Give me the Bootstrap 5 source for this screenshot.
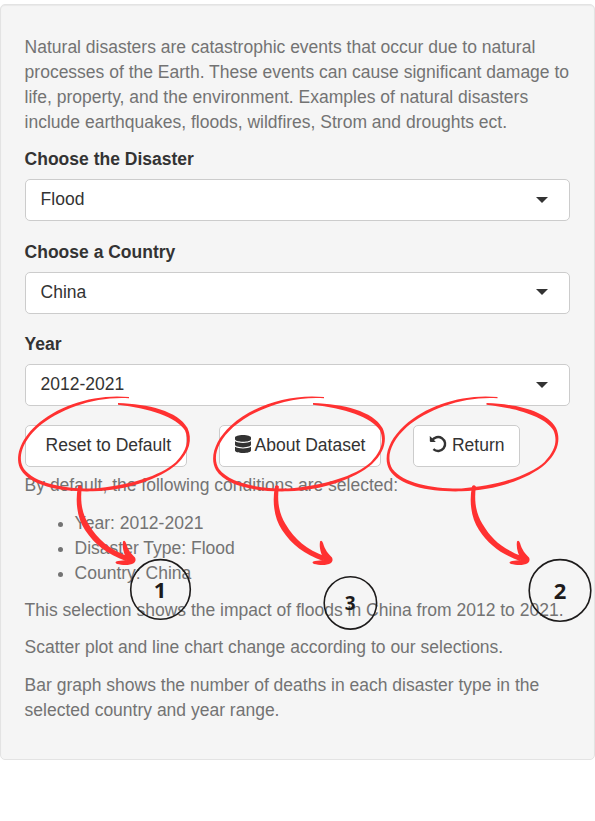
<!DOCTYPE html>
<html lang="en">
<head>
<meta charset="utf-8">
<meta name="viewport" content="width=device-width, initial-scale=1">
<title>Natural disasters</title>
<link href="https://cdn.jsdelivr.net/npm/bootstrap@5.3.0/dist/css/bootstrap.min.css" rel="stylesheet">
<style>
  body { font-family: "Liberation Sans", Arial, sans-serif; font-size: 17.5px; line-height: 25px; color: #333; background: #fff; overflow: hidden; }
  .side-panel { margin-top: 4px; height: 756px; padding: 30px 24px 0 23.6px; background: #f5f5f5; border: 1.25px solid #e3e3e3; border-radius: 5px; box-shadow: inset 0 1px 1px rgba(0,0,0,.05); }
  .help-text { color: #737373; }
  .help-text p { margin-bottom: 12.5px; }
  .help-text .intro { margin-bottom: 12px; }
  .help-text ul { padding-left: 50px; margin: 13px 0 12px; }
  .help-text .lead-in { margin-bottom: 0; }
  .field-label { height: 32px; }
  .select-box { height: 42px; padding: 0 21px 1px 15px; background: #fff; border: 1px solid #ccc; border-radius: 5px; margin-bottom: 18.5px; cursor: pointer; }
  .caret { width: 12px; height: 6px; fill: #333; }
  .actions { gap: 32px; margin-bottom: 6px; }
  .btn-plain { height: 42px; padding: 0 15px 1px; font-size: 17.5px; line-height: 25px; color: #333; background: #fff; border: 1px solid #ccc; border-radius: 5px; white-space: nowrap; }
  #reset { padding-left: 20px; padding-right: 14.5px; }
  #about { gap: 4px; }
  #back { gap: 4.5px; padding-right: 14.5px; }
  #about svg, #back svg { margin-bottom: 2px; }
  .notes { left: 0; top: 0; width: 595px; height: 821px; pointer-events: none; }
  .notes text { font: 700 22px "Open Sans", sans-serif; fill: #1d1b1b; text-anchor: middle; }
</style>
<script src="https://cdn.jsdelivr.net/npm/bootstrap@5.3.0/dist/js/bootstrap.bundle.min.js"></script>
</head>
<body>
<main class="side-panel">
  <div class="help-text"><p class="intro">Natural disasters are catastrophic events that occur due to natural<br>processes of the Earth. These events can cause significant damage to<br>life, property, and the environment. Examples of natural disasters<br>include earthquakes, floods, wildfires, Strom and droughts ect.</p></div>

  <div class="field-label fw-bold">Choose the Disaster</div>
  <div class="select-box d-flex align-items-center justify-content-between"><span>Flood</span><svg class="caret" viewBox="0 0 12 6"><path d="M0 0h12L6 6z"/></svg></div>
  <div class="field-label fw-bold">Choose a Country</div>
  <div class="select-box d-flex align-items-center justify-content-between"><span>China</span><svg class="caret" viewBox="0 0 12 6"><path d="M0 0h12L6 6z"/></svg></div>
  <div class="field-label fw-bold">Year</div>
  <div class="select-box d-flex align-items-center justify-content-between"><span>2012-2021</span><svg class="caret" viewBox="0 0 12 6"><path d="M0 0h12L6 6z"/></svg></div>

  <div class="actions d-flex">
    <button type="button" class="btn btn-plain" id="reset">Reset to Default</button>
    <button type="button" class="btn btn-plain d-flex align-items-center" id="about"><svg width="16" height="18" viewBox="0 0 448 512" preserveAspectRatio="none" fill="#333"><path d="M448 73v46c0 40-100 73-224 73S0 159 0 119V73C0 33 100 0 224 0s224 33 224 73zm0 103v104c0 40-100 72-224 72S0 320 0 280V176c48 33 136 49 224 49s176-16 224-49zm0 160v103c0 40-100 73-224 73S0 479 0 439V336c48 33 136 48 224 48s176-15 224-48z"/></svg><span>About Dataset</span></button>
    <button type="button" class="btn btn-plain d-flex align-items-center" id="back"><svg width="18" height="18" viewBox="0 0 18 18"><path d="M3 5.600A7 7 0 1 1 4.400 14.200" fill="none" stroke="#333" stroke-width="2.400"/><path d="M1 1.200L3.300 3.300 6.800 6.900H1.600Q.8 6.900.8 6.100V1.400z" fill="#333"/></svg><span>Return</span></button>
  </div>

  <div class="help-text">
    <p class="lead-in">By default, the following conditions are selected:</p>
    <ul><li>Year: 2012-2021</li><li>Disaster Type: Flood</li><li>Country: China</li></ul>
    <p>This selection shows the impact of floods in China from 2012 to 2021.</p>
    <p>Scatter plot and line chart change according to our selections.</p>
    <p>Bar graph shows the number of deaths in each disaster type in the<br>selected country and year range.</p>
  </div>
</main>

<svg class="notes position-absolute" viewBox="0 0 595 821">
  <defs>
    <path id="loop" fill="#ff3131" d="M129 397C96 393.500 58 405 36 425.500C20 440 14 458 21 470C31 486.500 63 492.200 93 491.300C127 490.500 160 479 177 464C190 452 192.500 439 187.500 428C178 411 148 404 118 403L118 404.700C148 408 177 417 185 430.500C189 440 187.500 450 176 462C161 476 127 486 93 488.500C65 489 35 483.500 24 469C17 458 22 442 38 427.300C60 408 97 396 129 398.200Z"/>
    <g id="arrow">
      <path fill="#ff3131" d="M78 486.500Q79.700 484 81.900 486.500C80 501 81.800 513 88.500 524C98 540 109 549 129 556.800L126 561C107 554 95 545 85 530C77 518 75 501 78 486.500Z"/>
      <path fill="#ff3131" d="M123 541.500Q124.500 539.500 126 543C128 550 131 553.500 135 557.500Q136.500 560.500 134 563C129 566 122 565 117 564Q113.500 562 118 561L127 560C124 553.500 122 548 123 541.500Z"/>
    </g>
  </defs>
  <use href="#loop"/><use href="#loop" x="195"/><use href="#loop" x="368.500"/>
  <use href="#arrow"/><use href="#arrow" x="197"/><use href="#arrow" x="394"/>
  <g fill="none" stroke="#1d1b1b" stroke-width="1.600">
    <circle cx="160.500" cy="589.400" r="29.800"/><circle cx="350.400" cy="602.900" r="26.200"/><circle cx="560" cy="590.400" r="30.800"/>
  </g>
  <text x="160" y="597.500">1</text>
  <text x="350.300" y="609.800" style="font-size:19px">3</text>
  <text x="560" y="598.800">2</text>
</svg>
</body>
</html>
